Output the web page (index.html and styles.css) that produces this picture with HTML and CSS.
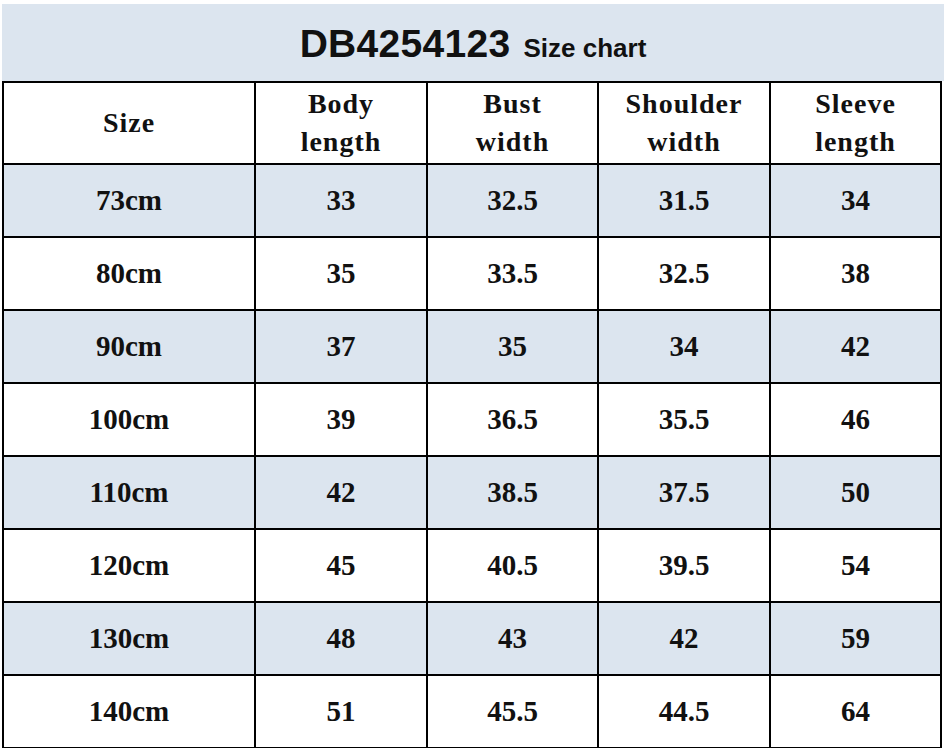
FILE: index.html
```html
<!DOCTYPE html>
<html>
<head>
<meta charset="utf-8">
<link rel="stylesheet" href="styles.css">
</head>
<body>
<div class="page">
  <div class="title"><span class="code">DB4254123</span><span class="sub">Size chart</span></div>
  <div class="chart">
    <div class="cell head">Size</div>
    <div class="cell head">Body<br>length</div>
    <div class="cell head">Bust<br>width</div>
    <div class="cell head">Shoulder<br>width</div>
    <div class="cell head">Sleeve<br>length</div>

    <div class="cell alt">73cm</div><div class="cell alt">33</div><div class="cell alt">32.5</div><div class="cell alt">31.5</div><div class="cell alt">34</div>
    <div class="cell">80cm</div><div class="cell">35</div><div class="cell">33.5</div><div class="cell">32.5</div><div class="cell">38</div>
    <div class="cell alt">90cm</div><div class="cell alt">37</div><div class="cell alt">35</div><div class="cell alt">34</div><div class="cell alt">42</div>
    <div class="cell">100cm</div><div class="cell">39</div><div class="cell">36.5</div><div class="cell">35.5</div><div class="cell">46</div>
    <div class="cell alt">110cm</div><div class="cell alt">42</div><div class="cell alt">38.5</div><div class="cell alt">37.5</div><div class="cell alt">50</div>
    <div class="cell">120cm</div><div class="cell">45</div><div class="cell">40.5</div><div class="cell">39.5</div><div class="cell">54</div>
    <div class="cell alt">130cm</div><div class="cell alt">48</div><div class="cell alt">43</div><div class="cell alt">42</div><div class="cell alt">59</div>
    <div class="cell">140cm</div><div class="cell">51</div><div class="cell">45.5</div><div class="cell">44.5</div><div class="cell">64</div>
  </div>
</div>
</body>
</html>
```
FILE: styles.css
```css
html, body {
  margin: 0;
  padding: 0;
  background: #ffffff;
}
.page {
  width: 944px;
  height: 748px;
  padding-top: 4px;
  box-sizing: border-box;
  overflow: hidden;
}
.title {
  margin-left: 2px;
  height: 77px;
  background: #dce5ef;
  display: flex;
  align-items: baseline;
  justify-content: center;
  padding-top: 18px;
  box-sizing: border-box;
  font-family: "Liberation Sans", Arial, sans-serif;
  font-weight: bold;
  color: #111;
}
.code {
  font-size: 39px;
  letter-spacing: 0.3px;
}
.sub {
  font-size: 26px;
  margin-left: 13px;
}
.chart {
  margin-left: 2px;
  width: 940px;
  box-sizing: border-box;
  background: #000;
  padding: 2px;
  display: grid;
  grid-template-columns: 250px 170px 169px 170px 169px;
  grid-template-rows: 80px repeat(8, 71px);
  gap: 2px;
}
.cell {
  background: #fff;
  display: flex;
  align-items: center;
  justify-content: center;
  text-align: center;
  font-family: "Liberation Serif", "Times New Roman", serif;
  font-weight: bold;
  font-size: 29px;
  color: #111;
}
.cell.alt {
  background: #dce5ef;
}
.cell.head {
  font-size: 28px;
  line-height: 38px;
  letter-spacing: 1px;
}
```
